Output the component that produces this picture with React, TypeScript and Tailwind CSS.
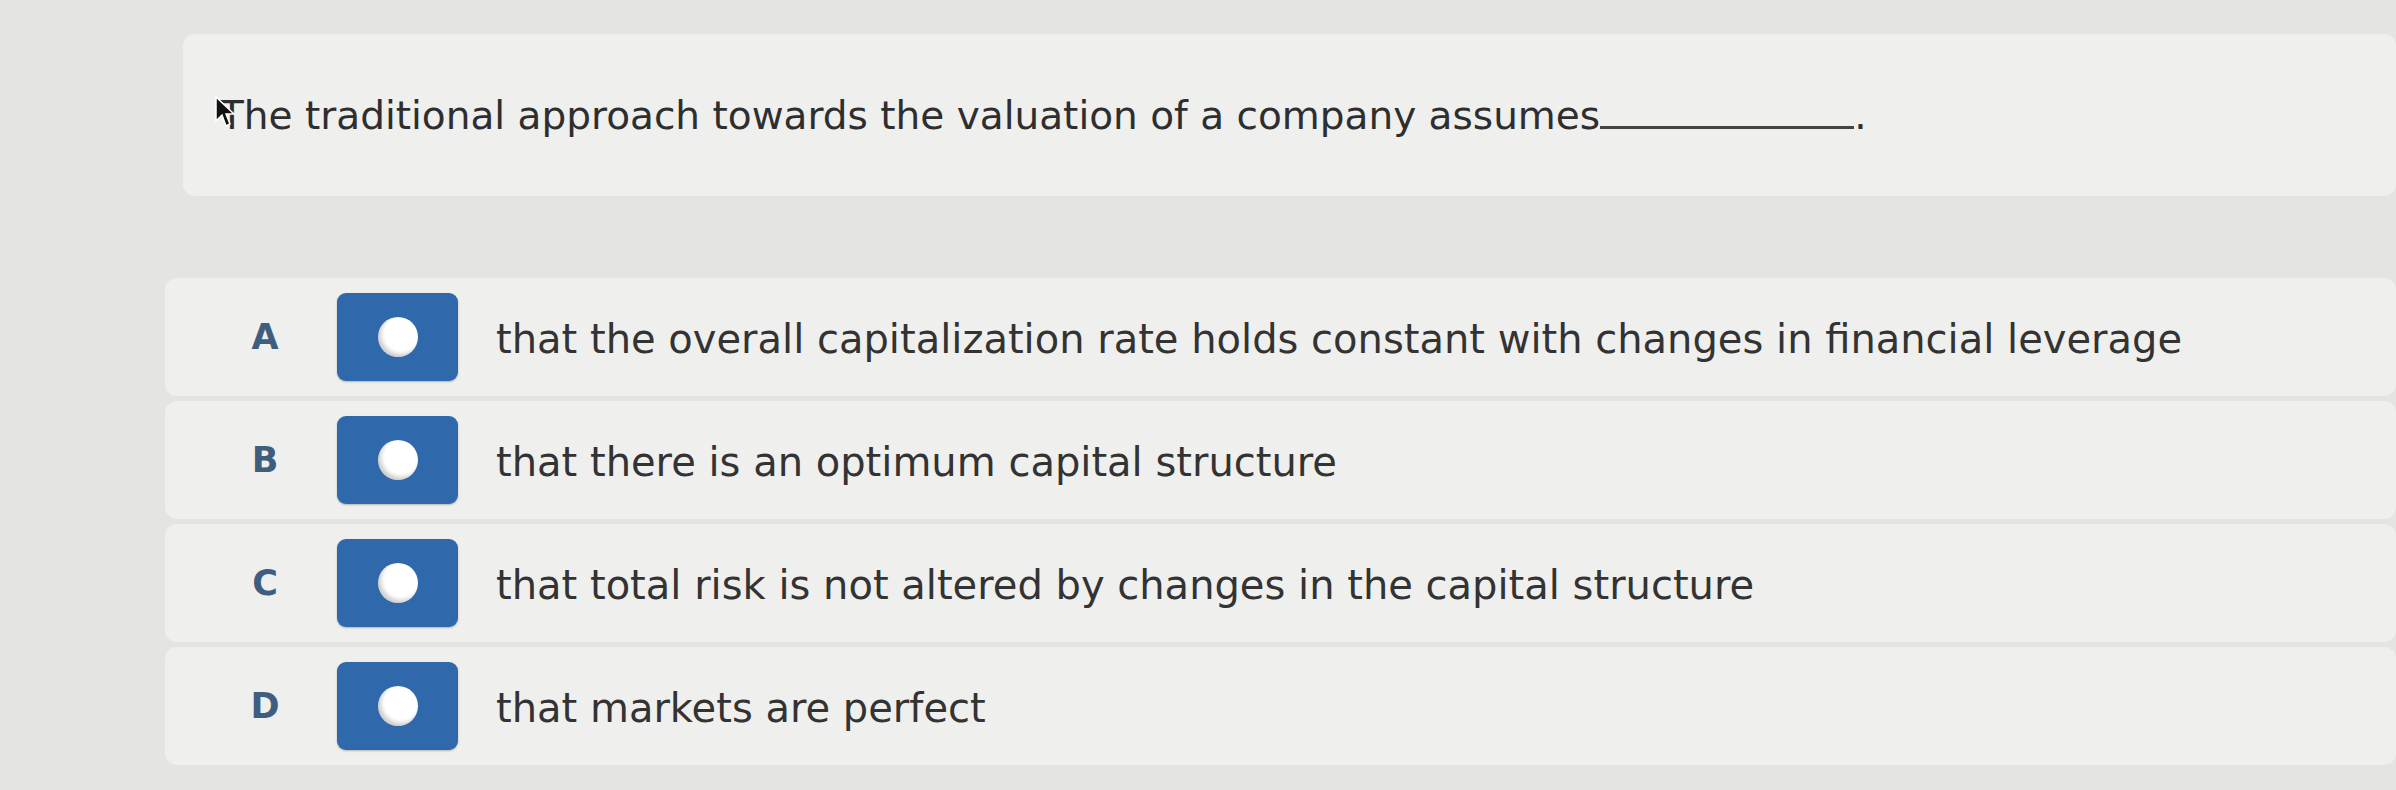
import React from "react";

const options = [
  { letter: "A", text: "that the overall capitalization rate holds constant with changes in financial leverage" },
  { letter: "B", text: "that there is an optimum capital structure" },
  { letter: "C", text: "that total risk is not altered by changes in the capital structure" },
  { letter: "D", text: "that markets are perfect" },
];

const Cursor = () => (
  <svg
    className="absolute left-[-6px] top-[8px]"
    width="22"
    height="34"
    viewBox="0 0 22 34"
  >
    <path d="M2 2 L2 26 L8 20 L12 31 L16 29 L12 19 L20 19 Z" fill="#111" stroke="#fff" strokeWidth="1.5" />
  </svg>
);

const OptionRow = ({ letter, text }: { letter: string; text: string }) => {
  return (
    <div className="flex items-center h-[118px] rounded-xl bg-[#efefee] pl-[80px]">
      <div className="w-[40px] text-center font-bold text-[35px] text-[#3e5e80]">{letter}</div>
      <button
        type="button"
        className="ml-[52px] w-[121px] h-[88px] rounded-[9px] bg-[#2f69ab] flex items-center justify-center shadow-[0_1px_2px_rgba(0,0,0,0.25)]"
      >
        <span className="block w-[40px] h-[40px] rounded-full bg-white shadow-[inset_3px_-3px_4px_rgba(0,0,0,0.2)]"></span>
      </button>
      <div className="ml-[38px] text-[40px] text-[#333333] pt-[4px]">{text}</div>
    </div>
  );
};

export default function App() {
  return (
    <div
      className="w-[2396px] h-[790px] overflow-hidden bg-[#e4e4e3] pt-[34px]"
      style={{ fontFamily: '"DejaVu Sans", Verdana, sans-serif' }}
    >
      <div className="ml-[183px] h-[162px] rounded-xl bg-[#efefee] flex items-center pl-[37px] pt-[2px]">
        <div className="relative text-[39px] text-[#2e2e2e]">
          <Cursor />
          The traditional approach towards the valuation of a company assumes
          <span className="inline-block w-[254px] border-b-[3px] border-[#444]"></span>.
        </div>
      </div>
      <div className="mt-[82px] ml-[165px] flex flex-col gap-[5px]">
        {options.map((o) => (
          <OptionRow key={o.letter} letter={o.letter} text={o.text} />
        ))}
      </div>
    </div>
  );
}
